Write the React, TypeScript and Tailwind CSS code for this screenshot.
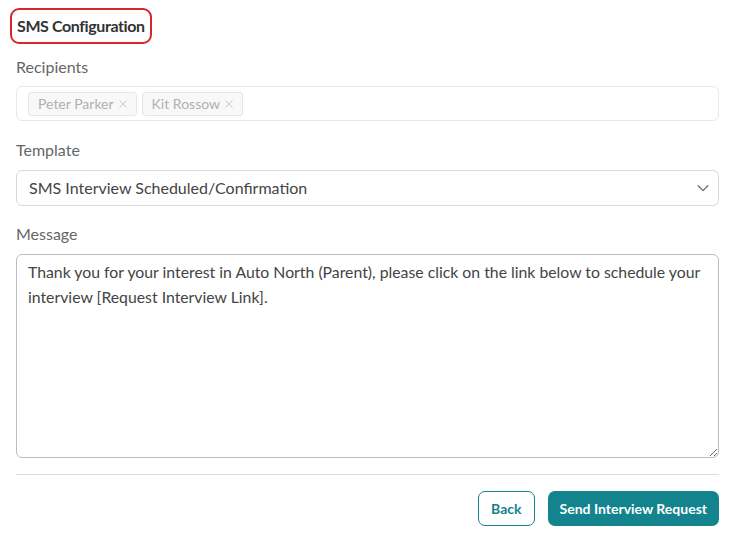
import React from "react";

function Tag({ label }: { label: string }) {
  return (
    <span className="flex items-center gap-[5px] h-[24px] pl-[9px] pr-[9px] rounded-[3px] border border-[#e6e6e6] bg-[#f8f8f8] text-[14px] text-[#b0b0b0]">
      {label}
      <svg width="8" height="8" viewBox="0 0 8 8" stroke="#c8c8c8" strokeWidth="1" fill="none">
        <path d="M0.5 0.5 L7.5 7.5 M7.5 0.5 L0.5 7.5" />
      </svg>
    </span>
  );
}

export default function App() {
  return (
    <div className="w-[735px] h-[550px] bg-white px-[16px] pt-[8px] text-[#444]" style={{ fontFamily: "Lato, 'Noto Sans', sans-serif" }}>
      <div className="inline-flex items-center -ml-[6px] h-[36px] px-[5px] rounded-[9px] border-[2px] border-[#d9262c]">
        <h2 className="text-[16px] font-bold text-[#333] tracking-[-0.4px]">SMS Configuration</h2>
      </div>
      <div className="mt-[12px] text-[16px] leading-[22px] text-[#666]">Recipients</div>
      <div className="mt-[8px] h-[35px] flex items-center gap-[5px] px-[11px] rounded-[6px] border border-[#e8e8e8]">
        <Tag label="Peter Parker" />
        <Tag label="Kit Rossow" />
      </div>
      <div className="mt-[18px] text-[16px] leading-[22px] text-[#666]">Template</div>
      <div className="mt-[9px] h-[36px] flex items-center justify-between pl-[12px] pr-[8px] rounded-[6px] border border-[#d9d9d9] text-[16px] text-[#444]">
        <span>SMS Interview Scheduled/Confirmation</span>
        <svg width="14" height="14" viewBox="0 0 16 16" fill="none" stroke="#6b7280" strokeWidth="1.6" strokeLinecap="round" strokeLinejoin="round">
          <path d="M2.5 5.5 L8 11 L13.5 5.5" />
        </svg>
      </div>
      <div className="mt-[17px] text-[16px] leading-[22px] text-[#666]">Message</div>
      <textarea
        className="mt-[9px] block w-full h-[204px] pl-[11px] pr-[4px] py-[4px] rounded-[6px] border border-[#bdbdbd] text-[15.8px] leading-[25px] text-[#444] outline-none"
        defaultValue="Thank you for your interest in Auto North (Parent), please click on the link below to schedule your interview [Request Interview Link]."
      />
      <div className="mt-[16px] border-t border-[#dcdcdc]" />
      <div className="mt-[16px] flex justify-end gap-[13px]">
        <button className="h-[35px] px-[12px] rounded-[7px] border border-[#13838d] bg-white text-[14px] font-bold text-[#13838d]">Back</button>
        <button className="h-[35px] px-[12px] rounded-[7px] bg-[#13838d] text-[14px] font-bold text-white">Send Interview Request</button>
      </div>
    </div>
  );
}
